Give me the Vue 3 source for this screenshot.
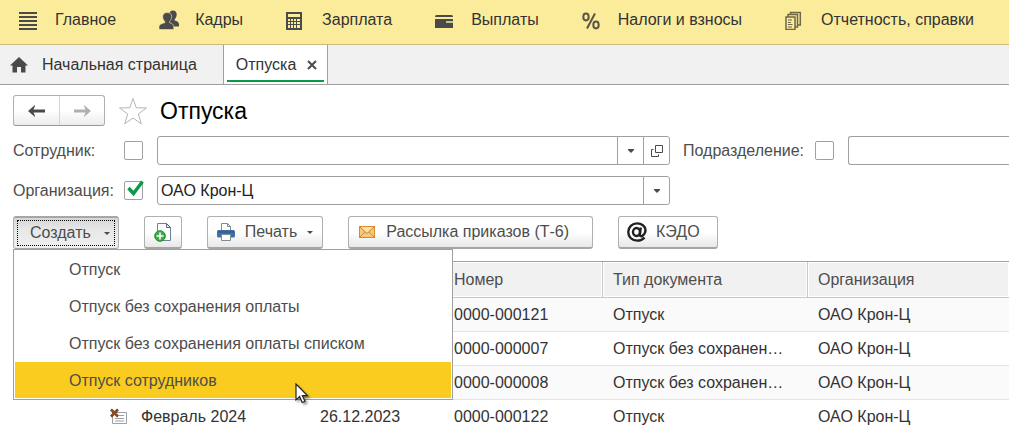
<script setup>
import { ref } from 'vue'

const sections = [
  { id: 'main', title: 'Главное' },
  { id: 'staff', title: 'Кадры' },
  { id: 'salary', title: 'Зарплата' },
  { id: 'payments', title: 'Выплаты' },
  { id: 'taxes', title: 'Налоги и взносы' },
  { id: 'reports', title: 'Отчетность, справки' },
]

const menuItems = [
  'Отпуск',
  'Отпуск без сохранения оплаты',
  'Отпуск без сохранения оплаты списком',
  'Отпуск сотрудников',
]
const activeItem = ref(3)

const rows = [
  { number: '0000-000121', type: 'Отпуск', org: 'ОАО Крон-Ц' },
  { number: '0000-000007', type: 'Отпуск без сохранен…', org: 'ОАО Крон-Ц' },
  { number: '0000-000008', type: 'Отпуск без сохранен…', org: 'ОАО Крон-Ц' },
  { month: 'Февраль 2024', date: '26.12.2023', number: '0000-000122', type: 'Отпуск', org: 'ОАО Крон-Ц' },
]

const employee = ref('')
const department = ref('')
const organization = ref('ОАО Крон-Ц')
const byEmployee = ref(false)
const byDepartment = ref(false)
const byOrganization = ref(true)
</script>

<template>
  <div class="app">
    <nav class="sections">
      <a v-for="s in sections" :key="s.id" class="section" href="#">
        <svg v-if="s.id === 'main'" class="section-icon" viewBox="0 0 20 20">
          <path d="M0 3h18M0 7h18M0 11h18M0 15h18M0 19h18" stroke="#4a4a4a" stroke-width="2" />
        </svg>
        <svg v-else-if="s.id === 'staff'" class="section-icon" viewBox="0 0 20 20" fill="#4a4a4a">
          <path d="M14 .5c2.500 0 3.800 1.700 3.700 4-.1 2.200-.9 3.800-2 4.800v1.200c2.300.8 4.300 1.600 4.300 3.700v2.300h-6l-4-4V5C10.300 2 11.500.5 14 .5z" />
          <path d="M8.200 2.500c3 0 4.600 1.800 4.500 4.300-.1 2.200-1 3.600-2.200 4.700v1.200c2.300.8 4.300 1.600 4.300 4V18.500q0 1-1 1H1q-1 0-1-1v-1.800c0-2.400 2.800-3.200 5.800-4v-1.200C4.600 10.400 3.800 9 3.700 6.800 3.600 4.300 5.200 2.500 8.200 2.500z" stroke="#fbec9c" stroke-width=".6" />
        </svg>
        <svg v-else-if="s.id === 'salary'" class="section-icon" viewBox="0 0 20 20">
          <path fill="#4a4a4a" d="M0 2h16v18H0z" />
          <path fill="#fbec9c" d="M2 4h12v3H2zM2 9h2v2H2zM5 9h2v2H5zM8 9h2v2H8zM11 9h3v2h-3zM2 12h2v2H2zM5 12h2v2H5zM8 12h2v2H8zM11 12h3v2h-3zM2 15h2v3H2zM5 15h2v3H5zM8 15h2v3H8zM11 15h3v3h-3z" />
        </svg>
        <svg v-else-if="s.id === 'payments'" class="section-icon" viewBox="0 0 20 20">
          <path fill="#4a4a4a" d="M1.500 5h15Q18 5 18 7H0Q0 5 1.500 5zM0 9h18v8.500q0 .5-.5.500H.5Q0 18 0 17.500z" />
          <path d="M11 12h7" stroke="#fbec9c" stroke-width="1.500" />
        </svg>
        <svg v-else-if="s.id === 'taxes'" class="section-icon" viewBox="0 0 20 20" fill="none" stroke="#5a5646" stroke-width="2">
          <ellipse cx="4" cy="7" rx="2.700" ry="3.400" />
          <ellipse cx="14" cy="15" rx="2.700" ry="3.400" />
          <path d="M13 3.500L5 18.500" />
        </svg>
        <svg v-else class="section-icon" viewBox="0 0 20 20" fill="none" stroke="#6e6748" stroke-width="1.500">
          <path d="M1 7h9v12.500H1zM3 7V4.500h9.500V17H10M5.500 4.500V2.500h9.800V15h-2.800" />
          <path d="M3 10h4M3 12.500h3M3 14.500h4.500M3 17h4" stroke-width="1.200" />
        </svg>
        <span>{{ s.title }}</span>
      </a>
    </nav>

    <div class="tabs">
      <a class="tab home" href="#">
        <svg class="home-icon" viewBox="0 0 18 16" fill="#4a4a4a">
          <path d="M9 0l9 8.500h-2.500V15.500h-4.500V10H7v5.500H2.500V8.500H0z" />
        </svg>
        <span>Начальная страница</span>
      </a>
      <div class="tab current">
        <span>Отпуска</span>
        <button class="close" type="button" aria-label="Закрыть">
          <svg viewBox="0 0 10 10" width="10" height="10"><path d="M1 1l8 8M9 1L1 9" stroke="#4a4a4a" stroke-width="2" /></svg>
        </button>
      </div>
    </div>

    <main class="page">
      <header class="heading">
        <div class="history">
          <button type="button" aria-label="Назад">
            <svg viewBox="0 0 18 12" width="18" height="12"><path fill="#4a4a4a" d="M0 6l7-6v1l-1.500 3.500H17v3H5.500L7 11v1z" /></svg>
          </button>
          <button type="button" aria-label="Вперед">
            <svg viewBox="0 0 18 12" width="18" height="12"><path fill="#b0b0b0" d="M18 6l-7-6v1l1.500 3.500H1v3h11.500L11 11v1z" /></svg>
          </button>
        </div>
        <button class="star" type="button" aria-label="В избранное">
          <svg viewBox="0 0 30 28" width="30" height="28"><path d="M15 1.500l3.300 9.300 10.200.1-8.200 6.100 3 9.800L15 21l-8.300 5.800 3-9.800L1.500 10.900l10.200-.1z" fill="#fff" stroke="#b5b5b5" /></svg>
        </button>
        <h1>Отпуска</h1>
      </header>

      <div class="filters">
        <div class="filter">
          <label for="employee">Сотрудник:</label>
          <span class="check"><input v-model="byEmployee" type="checkbox" aria-label="Отбор по сотруднику" /></span>
          <div class="field">
            <input id="employee" v-model="employee" type="text" />
            <button type="button" aria-label="Выбрать">
              <svg viewBox="0 0 6 4" width="6" height="4"><path d="M0 0h6v1L3 4 0 1z" fill="#4a4a4a" /></svg>
            </button>
            <button type="button" aria-label="Открыть">
              <svg viewBox="0 0 12 12" width="12" height="12" fill="none" stroke="#4a4a4a"><path d="M4.500.5h7v7h-7zM2.500 4.500h-2v7h7v-2" /></svg>
            </button>
          </div>
        </div>
        <div class="filter department">
          <label for="department">Подразделение:</label>
          <span class="check"><input v-model="byDepartment" type="checkbox" aria-label="Отбор по подразделению" /></span>
          <div class="field open-end">
            <input id="department" v-model="department" type="text" />
          </div>
        </div>
        <div class="filter">
          <label for="organization">Организация:</label>
          <span class="check">
            <input v-model="byOrganization" type="checkbox" aria-label="Отбор по организации" />
            <svg v-if="byOrganization" class="tick" viewBox="0 0 18 17"><path d="M2.500 8l5 5.500L16.500 1.500" fill="none" stroke="#0a9a4a" stroke-width="3.400" /></svg>
          </span>
          <div class="field">
            <select id="organization" v-model="organization">
              <option>ОАО Крон-Ц</option>
            </select>
            <span class="arrow">
              <svg viewBox="0 0 6 4" width="6" height="4"><path d="M0 0h6v1L3 4 0 1z" fill="#4a4a4a" /></svg>
            </span>
          </div>
        </div>
      </div>

      <div class="toolbar">
        <button class="btn create" type="button" aria-haspopup="true" aria-expanded="true">
          <span>Создать</span>
          <svg viewBox="0 0 6 3" width="6" height="3"><path d="M0 0h6L3 3z" fill="#4a4a4a" /></svg>
        </button>
        <button class="btn copy" type="button" aria-label="Создать копированием">
          <svg viewBox="0 0 18 20" width="18" height="20">
            <path d="M3.500 1.500h9l4 4v13h-13z" fill="#fff" stroke="#6f828f" />
            <path d="M12.500 1.500v4h4z" fill="#e8eef2" stroke="#4f6474" />
            <circle cx="6" cy="14" r="5.300" fill="#3cae49" stroke="#238334" />
            <path d="M6 10.500v7M2.500 14h7" stroke="#fff" stroke-width="1.600" />
          </svg>
        </button>
        <button class="btn print" type="button" aria-haspopup="true">
          <svg viewBox="0 0 18 18" width="18" height="18">
            <path d="M4.500 8V.5h6l3 3V8z" fill="#fff" stroke="#7d8b96" />
            <path d="M10.500.5v3h3" fill="none" stroke="#7d8b96" />
            <rect y="7" width="18" height="7.500" rx="1.500" fill="#3f72a4" />
            <path d="M1 9h16" stroke="#295580" />
            <path d="M4.500 11.500h9v6h-9z" fill="#fff" stroke="#7d8b96" />
          </svg>
          <span>Печать</span>
          <svg class="caret" viewBox="0 0 6 3" width="6" height="3"><path d="M0 0h6L3 3z" fill="#4a4a4a" /></svg>
        </button>
        <button class="btn mail" type="button">
          <svg viewBox="0 0 16 12" width="16" height="12">
            <rect x=".5" y=".5" width="15" height="11" fill="#f9c879" stroke="#d98b2b" />
            <path d="M1 11l5-5M15 11l-5-5" stroke="#d98b2b" />
            <path d="M1 1l7 6.500L15 1" fill="#ffe2aa" stroke="#c97a20" />
          </svg>
          <span>Рассылка приказов (Т-6)</span>
        </button>
        <button class="btn edo" type="button">
          <svg viewBox="0 0 20 20" width="20" height="20" fill="none" stroke="#222" stroke-width="2.400">
            <ellipse cx="9.500" cy="10" rx="3.500" ry="4" />
            <path d="M13.800 5.500l-1 7c-.2 2 1.500 2.200 3 1 1.500-1.200 2.700-3 2.700-5.500C18.300 4 14.500 1.400 10.200 1.400 5 1.400 1.300 5 1.300 10c0 5.200 3.700 8.600 8.900 8.600 3 0 5.500-1 7.300-3.200" />
          </svg>
          <span>КЭДО</span>
        </button>

        <div class="menu" role="menu">
          <button
            v-for="(item, i) in menuItems"
            :key="item"
            type="button"
            role="menuitem"
            :class="{ active: i === activeItem }"
            @mouseenter="activeItem = i"
          >{{ item }}</button>
          <svg class="pointer" viewBox="0 0 14 21" width="14" height="21">
            <path d="M1 1v16l3.700-3.400L7.200 19.500l2.700-1.200-2.500-5.600h5z" fill="#fff" stroke="#222" stroke-width="1.200" />
          </svg>
        </div>
      </div>

      <table class="list">
        <colgroup>
          <col class="c-mark" /><col class="c-month" /><col class="c-date" /><col class="c-number" /><col class="c-type" /><col />
        </colgroup>
        <thead>
          <tr><th></th><th></th><th></th><th>Номер</th><th>Тип документа</th><th>Организация</th></tr>
        </thead>
        <tbody>
          <tr v-for="row in rows" :key="row.number">
            <td class="mark">
              <svg v-if="row.month" viewBox="0 0 18 17" width="18" height="17">
                <path d="M2.500 4.500h14v11h-14z" fill="#fff" stroke="#9aa0a4" />
                <path d="M9 7.500h5M5 10.500h9M5 13h9" stroke="#9aa0a4" />
                <path d="M1 1.500l7 7M8 1.500l-7 7" stroke="#7a3d1c" stroke-width="2.600" />
                <path d="M1.500 2l6 6M7.500 2l-6 6" stroke="#cf7440" stroke-dasharray="1 1" />
              </svg>
            </td>
            <td class="month">{{ row.month }}</td>
            <td>{{ row.date }}</td>
            <td>{{ row.number }}</td>
            <td>{{ row.type }}</td>
            <td>{{ row.org }}</td>
          </tr>
        </tbody>
      </table>
    </main>
  </div>
</template>

<style>
body {
  margin: 0;
  background: #fff;
}
</style>

<style scoped>
.app {
  font: 16px/20px "Liberation Sans", Arial, sans-serif;
  color: #333;
  overflow: hidden;
}
.app *,
.app *::before {
  box-sizing: border-box;
}
button,
input,
select {
  font: inherit;
  color: inherit;
  margin: 0;
}
button {
  padding: 0;
  border: 0;
  background: none;
}
svg {
  display: block;
  flex: none;
}
a {
  color: inherit;
  text-decoration: none;
}

.sections {
  display: flex;
  align-items: center;
  gap: 43px;
  height: 45px;
  padding: 0 19px 4px;
  background: #fbec9c;
  border-bottom: 1px solid #c9bd7d;
  white-space: nowrap;
}
.section {
  display: flex;
  align-items: center;
  gap: 16px;
}
.section-icon {
  width: 20px;
  height: 20px;
}

.tabs {
  display: flex;
  height: 40px;
  background: #f1f1f1;
  border-bottom: 1px solid #a0a0a0;
}
.tab {
  display: flex;
  align-items: center;
}
.home {
  gap: 14px;
  padding: 0 26px 0 10px;
}
.home-icon {
  width: 18px;
  height: 16px;
}
.current {
  position: relative;
  gap: 11px;
  padding: 0 10px 0 12px;
  background: #fff;
  border: solid #a0a0a0;
  border-width: 0 1px;
}
.current::before {
  content: "";
  position: absolute;
  left: 3px;
  right: 3px;
  bottom: 2px;
  height: 2px;
  background: #0a9a4a;
}

.page {
  padding: 10px 0 0 13px;
}
.heading {
  display: flex;
  align-items: center;
  height: 31px;
}
.history {
  display: flex;
  height: 31px;
  border: 1px solid #b0b0b0;
  border-bottom-color: #999;
  border-radius: 3px;
  background: linear-gradient(#fff 50%, #ececec);
}
.history button {
  display: grid;
  place-items: center;
  width: 45px;
}
.history button + button {
  border-left: 1px solid #d4d4d4;
}
.star {
  margin: 0 12px 0 13px;
}
h1 {
  margin: 0;
  font-size: 23px;
  line-height: 28px;
  font-weight: 400;
  color: #000;
}

.filters {
  display: grid;
  grid-template-columns: minmax(0, 657fr) minmax(0, 326fr);
  gap: 11px 13px;
  margin-top: 10px;
}
.filter {
  display: grid;
  grid-template-columns: 111px 33px minmax(0, 1fr);
  align-items: center;
  color: #4d4d4d;
}
.department {
  grid-template-columns: 132px 33px minmax(0, 1fr);
}
.check {
  position: relative;
  width: 19px;
  height: 19px;
}
.check input {
  appearance: none;
  display: block;
  width: 19px;
  height: 19px;
  border: 1px solid #a0a0a0;
  border-radius: 2px;
  background: #fff;
}
.tick {
  position: absolute;
  left: 2px;
  top: -1px;
  width: 18px;
  height: 17px;
  pointer-events: none;
}
.field {
  position: relative;
  display: flex;
  height: 29px;
  border: 1px solid #a0a0a0;
  border-radius: 3px;
  background: #fff;
  color: #222;
}
.open-end {
  border-right: 0;
  border-radius: 3px 0 0 3px;
}
.field input,
.field select {
  flex: 1;
  min-width: 0;
  padding: 0 3px;
  border: 0;
  outline: 0;
  background: none;
  appearance: none;
}
.field button,
.arrow {
  display: grid;
  place-items: center;
  width: 26px;
  border-left: 1px solid #a0a0a0;
}
.arrow {
  position: absolute;
  top: 0;
  right: 0;
  bottom: 0;
  pointer-events: none;
}

.toolbar {
  position: relative;
  display: flex;
  gap: 25px;
  margin-top: 11px;
}
.btn {
  display: flex;
  align-items: center;
  height: 33px;
  border: 1px solid #b0b0b0;
  border-bottom: 2px solid #a6a6a6;
  border-radius: 3px;
  background: linear-gradient(#fff 50%, #e8e8e8);
  color: #4d4d4d;
  white-space: nowrap;
}
.create {
  position: relative;
  gap: 13px;
  padding: 0 8px 0 16px;
  background: linear-gradient(#d6d6d6, #e8e8e8 40%, #efefef);
  border-top: 2px solid #a6a6a6;
  border-bottom-width: 1px;
}
.create::before {
  content: "";
  position: absolute;
  inset: 2px 3px;
  border: 1px dotted #000;
}
.copy {
  padding: 0 9px;
}
.print {
  gap: 10px;
  padding: 0 9px;
}
.mail {
  gap: 11px;
  padding: 0 23px 0 10px;
}
.edo {
  gap: 9px;
  padding: 0 17px 0 8px;
}

.menu {
  position: absolute;
  z-index: 2;
  top: 100%;
  left: 0;
  display: grid;
  gap: 1px;
  width: 440px;
  padding: 1px;
  border: 1px solid #a0a0a0;
  background: #fff;
}
.menu button {
  height: 36px;
  padding: 2px 54px 0;
  text-align: left;
  color: #4d4d4d;
}
.menu .active {
  background: #facc20;
}
.pointer {
  position: absolute;
  left: 281px;
  bottom: -5px;
  filter: drop-shadow(2px 2px 1px rgba(0, 0, 0, 0.4));
}

.list {
  width: 100%;
  margin-top: 12px;
  table-layout: fixed;
  border-collapse: separate;
  border-spacing: 0;
  border-top: 1px solid #a0a0a0;
}
.c-mark {
  width: 118px;
}
.c-month {
  width: 179px;
}
.c-date {
  width: 134px;
}
.c-number {
  width: 159px;
}
.c-type {
  width: 205px;
}
th,
td {
  padding: 0 10px;
  overflow: hidden;
  text-align: left;
  text-overflow: ellipsis;
  white-space: nowrap;
}
th {
  height: 36px;
  font-weight: 400;
  color: #4d4d4d;
  background: #f1f1f1;
  border-right: 1px solid #c8c8c8;
  border-bottom: 1px solid #c8c8c8;
  box-shadow: inset 0 0 0 1px #fff;
}
th:last-child {
  border-right: 0;
}
td {
  height: 34px;
  border-bottom: 1px solid #e4e4e4;
}
tbody tr:nth-child(odd) td {
  background: #fafafa;
}
tbody tr:last-child td {
  height: 33px;
  border-bottom: 0;
}
.mark {
  padding: 0 2px 0 97px;
}
</style>
